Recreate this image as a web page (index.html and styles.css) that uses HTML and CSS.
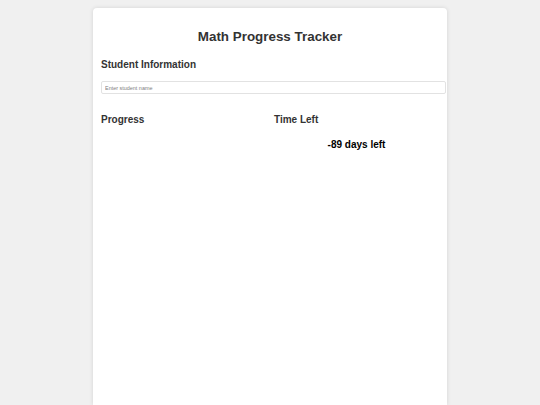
FILE: index.html
```html
<!DOCTYPE html>
<html lang="en">
<head>
<meta charset="utf-8">
<title>Math Progress Tracker</title>
<link rel="stylesheet" href="styles.css">
</head>
<body>
<div class="card">
  <h1 class="title">Math Progress Tracker</h1>
  <section class="student">
    <h2 class="section-title">Student Information</h2>
    <input class="name-input" type="text" placeholder="Enter student name">
  </section>
  <div class="columns">
    <section class="col">
      <h2 class="section-title">Progress</h2>
    </section>
    <section class="col">
      <h2 class="section-title">Time Left</h2>
      <div class="days-left">-89 days left</div>
    </section>
  </div>
</div>
</body>
</html>
```

FILE: styles.css
```css
html, body {
  margin: 0;
  padding: 0;
}
body {
  background: #f0f0f0;
  font-family: "Liberation Sans", Arial, sans-serif;
  padding-top: 8px;
  overflow: hidden;
  height: 405px;
  box-sizing: border-box;
}
.card {
  width: 338px;
  margin: 0 auto;
  padding: 8px;
  background: #fff;
  border-radius: 4px 4px 0 0;
  box-shadow: 0 0 4px rgba(0, 0, 0, 0.12);
  height: 381px;
}
.title {
  margin: 13px 0 0;
  font-size: 13.4px;
  line-height: 16px;
  font-weight: bold;
  color: #333;
  text-align: center;
}
.section-title {
  margin: 0;
  font-size: 10px;
  line-height: 12px;
  font-weight: bold;
  color: #333;
}
.student {
  margin-top: 14px;
}
.name-input {
  display: block;
  box-sizing: border-box;
  width: 345px;
  height: 13px;
  margin: 10px 0 0;
  padding: 0 3px;
  border: 1px solid #e2e2e2;
  border-radius: 2px;
  font-family: "Liberation Sans", Arial, sans-serif;
  font-size: 5.45px;
  color: #333;
  background: #fff;
  outline: none;
}
.name-input::placeholder {
  color: #808080;
}
.columns {
  display: grid;
  grid-template-columns: 1fr 1fr;
  column-gap: 8px;
  margin-top: 20px;
}
.days-left {
  margin-top: 13px;
  font-size: 10px;
  line-height: 12px;
  font-weight: bold;
  color: #000;
  text-align: center;
}
```
